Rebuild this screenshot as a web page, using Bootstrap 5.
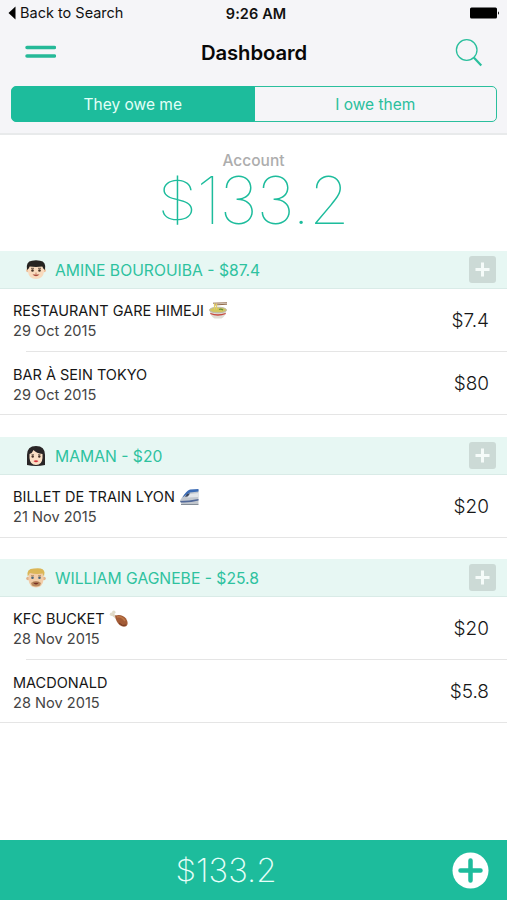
<!DOCTYPE html>
<html lang="en">
<head>
<meta charset="utf-8">
<meta name="viewport" content="width=device-width, initial-scale=1">
<title>Dashboard</title>
<link href="https://cdn.jsdelivr.net/npm/bootstrap@5.3.0/dist/css/bootstrap.min.css" rel="stylesheet">
<style>
:root{--teal:#1dbc9c}
body{font-family:Inter,"Liberation Sans",sans-serif;color:#222;background:#fff;line-height:20px}
svg{display:block;flex:none}
.app{height:900px}
.top-area{background:#f5f5f8;height:135px;border-bottom:2px solid #e8eaeb}
.status-row{height:26px;padding:0 7px 0 8px;font-size:14.5px;color:#111}
.status-row>*{flex:1 1 0}
.clock{font-size:14.5px;font-weight:600;letter-spacing:.1px;padding:1px 0 0 4px}
.title-row{height:60px;padding:0 24px 8px 24px}
.page-title{font-size:20.3px;font-weight:600;color:#080808;letter-spacing:-.1px;padding:1px 3px 0 0}
.segments{margin:0 10px 0 11px;height:36px}
.segments .btn{--bs-btn-color:#2abf9d;--bs-btn-border-color:#2abf9d;--bs-btn-border-radius:5px;--bs-btn-active-bg:var(--teal);--bs-btn-active-border-color:var(--teal);--bs-btn-active-color:#e3fff8;--bs-btn-padding-y:0;font-size:15.5px;letter-spacing:0;flex:1 1 0;line-height:35px}
.account{height:116px;padding-top:16px}
.account-label{font-size:15.5px;font-weight:500;color:#adadad;line-height:20px}
.account-total{font-size:65.5px;font-weight:100;line-height:50px;padding:5px 1px 0 0;color:#1dbc9c;letter-spacing:-1px}
.dollar{display:inline-block;transform:scaleY(.84)}
.group-head{height:38px;background:#e7f7f3;border-bottom:1px solid #d9ebe7;padding:0 11px 0 25px;color:#2ec29f;font-size:15.7px}
.group-name{margin-left:8px;padding-top:2px}
.add-box{width:27px;height:27px;border-radius:3px;background:#ccdad6}
.entry{height:63px;padding:2px 18px 0 13px}
.entry-line{border-bottom:1px solid #e5e5e5}
.entry-first{height:62px}
.entry-sep{height:1px;margin-left:26px;background:#e5e5e5}
.entry-title{font-size:14.5px;color:#171717;line-height:20px}
.entry-date{font-size:14.6px;color:#444;line-height:20px}
.entry-line .entry-text{padding-top:1px}
.price{font-size:19px;font-weight:300;color:#171717}
.owed-group{margin-bottom:22px}
.owed-single{margin-bottom:21px}
.bottom-bar{height:60px;background:var(--teal);color:#e6fff9;padding:0 18px 0 0}
.bottom-total{font-size:33px;font-weight:200;line-height:60px;width:452px}
.bottom-total .dollar{transform:scaleY(.9)}
</style>
</head>
<body>
<svg width="0" height="0" class="position-absolute">
<symbol id="plus-sq" viewBox="0 0 27 27"><path d="M13.5 6.5v14M6.500 13.500h14" stroke="#f5fbf9" stroke-width="3" fill="none"/></symbol>
</svg>
<div class="app d-flex flex-column">
<header class="top-area flex-shrink-0">
  <div class="status-row d-flex align-items-center">
    <div class="d-flex align-items-center"><svg width="8" height="14" viewBox="0 0 8 14"><path d="M7.500.5v13L.5 7z" fill="#000"/></svg><span class="back-text ms-1">Back to Search</span></div>
    <div class="clock text-center">9:26 AM</div>
    <div class="d-flex justify-content-end"><svg width="31" height="14" viewBox="0 0 31 14"><rect x="1" y="1.500" width="27" height="11" rx="1.500"/><path d="M29 5.200q2 1.800 0 3.600z"/></svg></div>
  </div>
  <div class="title-row d-flex align-items-center justify-content-between">
    <svg width="32" height="16" viewBox="0 0 32 16"><path d="M3 3.500h27.500M3 12h27.500" stroke="#25b998" stroke-width="3.500" stroke-linecap="round"/></svg>
    <div class="page-title">Dashboard</div>
    <svg width="28" height="29" viewBox="0 0 28 29" fill="none" stroke="#2abf9d"><circle cx="11.700" cy="12" r="10.300" stroke-width="1.300"/><path d="M18.800 19.500l7.500 8" stroke-width="2.200"/></svg>
  </div>
  <div class="btn-group segments d-flex" role="group">
    <button type="button" class="btn active">They owe me</button>
    <button type="button" class="btn">I owe them</button>
  </div>
</header>
<main class="flex-grow-1">
  <section class="account text-center">
    <div class="account-label">Account</div>
    <div class="account-total"><span class="dollar">$</span>133.2</div>
  </section>
  <section class="owed-group">
    <div class="group-head d-flex align-items-center">
      <svg width="22" height="22" viewBox="0 0 22 22"><circle cx="2.800" cy="11.500" r="1.800" fill="#edc09d"/><circle cx="19.200" cy="11.500" r="1.800" fill="#edc09d"/><path d="M3 7q8-6 16 0v6q-1 7-8 7T3 13z" fill="#f8dabd"/><path d="M2 11Q.5 2.500 7 1.800q4-1.300 8 0Q21.500 2.500 20 11l-1.700-1.500-1-2Q11 8.300 4.700 7.500l-1 2z" fill="#252320"/><circle cx="7.500" cy="11.500" r="1.300" fill="#473325"/><circle cx="14.500" cy="11.500" r="1.300" fill="#473325"/><path d="M6 9.300h3M13 9.300h3" stroke="#44332a" stroke-width=".8"/><path d="M7.500 15.500h7q-3.500 3.500-7 0z" fill="#a8493a"/><path d="M10 14q1 .8 2 0" stroke="#d59e7a" fill="none"/></svg>
      <span class="group-name me-auto">AMINE BOUROUIBA - $87.4</span>
      <span class="add-box"><svg width="27" height="27"><use href="#plus-sq"/></svg></span>
    </div>
    <div class="entry entry-first d-flex align-items-center justify-content-between">
      <div class="entry-text"><div class="entry-title d-flex align-items-center"><span>RESTAURANT GARE HIMEJI</span><svg class="ms-1" width="20" height="18" viewBox="0 0 20 18"><path d="M1.500 8h17q-.5 6-5 8.500h-7Q2 14 1.500 8z" fill="#dfddd5"/><path d="M2.300 11.500q7.500 3 15.400 0" stroke="#c84940" stroke-width="1.300" fill="none"/><ellipse cx="10" cy="8" rx="8.500" ry="2.800" fill="#d2c75f" stroke="#bdb9a8"/><path d="M11 7.500q2-1 4 .5" stroke="#658f3a" stroke-width="1.200" fill="none"/><path d="M5 1.200L19 .8M6 3l13-.8" stroke="#8f6847" stroke-width="1"/><path d="M6.500 1.500v6M8.500 1.500v6" stroke="#e3cf64" stroke-width="1.200"/></svg></div><div class="entry-date">29 Oct 2015</div></div>
      <div class="price">$7.4</div>
    </div>
    <div class="entry-sep"></div>
    <div class="entry entry-line d-flex align-items-center justify-content-between">
      <div class="entry-text"><div class="entry-title">BAR À SEIN TOKYO</div><div class="entry-date">29 Oct 2015</div></div>
      <div class="price">$80</div>
    </div>
  </section>
  <section class="owed-group owed-single">
    <div class="group-head d-flex align-items-center">
      <svg width="22" height="22" viewBox="0 0 22 22"><path d="M2 20V10Q2 1 11 1t9 9v10q-9 2-18 0z" fill="#292526"/><path d="M4.500 9q3-1 4-4 3 3.500 9 4v4q-.5 7-6.500 7t-6.500-7z" fill="#fbe0c5"/><circle cx="7.700" cy="11.500" r="1.200" fill="#493329"/><circle cx="14.300" cy="11.500" r="1.200" fill="#493329"/><path d="M6.500 9.700h2.500M13 9.700h2.500" stroke="#44332a" stroke-width=".7"/><path d="M8.500 16q2.500-1.500 5 0-2.500 2.700-5 0z" fill="#d5333d"/></svg>
      <span class="group-name me-auto">MAMAN - $20</span>
      <span class="add-box"><svg width="27" height="27"><use href="#plus-sq"/></svg></span>
    </div>
    <div class="entry entry-line d-flex align-items-center justify-content-between">
      <div><div class="entry-title d-flex align-items-center"><span>BILLET DE TRAIN LYON</span><svg class="ms-1" width="20" height="18" viewBox="0 0 20 18"><path d="M19.500 2v13.500H4Q.5 15 1 12.500 6 4 12 2z" fill="#c2c7ce"/><path d="M11 1.500l8.500-.5v2.500L11 4.500Q7 7 3.500 9.500 7 3 11 1.500z" fill="#3c6cb5"/><path d="M11 6l8.500-1v4L8 9.500z" fill="#e3e6ea"/><path d="M8 6l3-.7-2 3-3 .7z" fill="#37435a"/><path d="M1 13q9 0 18.500-2v1.500Q11 15 2 14.500z" fill="#51699a"/><path d="M2 16.300h17.500" stroke="#77818c" stroke-width="1.200"/></svg></div><div class="entry-date">21 Nov 2015</div></div>
      <div class="price">$20</div>
    </div>
  </section>
  <section class="owed-group">
    <div class="group-head d-flex align-items-center">
      <svg width="22" height="22" viewBox="0 0 22 22"><circle cx="3" cy="11.500" r="1.800" fill="#e1b28b"/><circle cx="19" cy="11.500" r="1.800" fill="#e1b28b"/><path d="M3.500 7q7.500-6 15 0v6q-1 7.500-7.500 7.500T3.500 13z" fill="#f2cda9"/><path d="M2.700 9.500Q1 1.500 9 1.500q10-1.500 10.500 4l-.5 4-1.500-3Q11 7.500 5 6z" fill="#dbb657"/><circle cx="7.500" cy="10.800" r="1.300" fill="#49667a"/><circle cx="14.500" cy="10.800" r="1.300" fill="#49667a"/><path d="M6 8.800h3M13 8.800h3" stroke="#9f7540" stroke-width=".8"/><path d="M6 16q5-4 10 0l-1 2.500q-4 2-8 0z" fill="#b98a5e"/><path d="M8 15.800h6q-3 3.200-6 0z" fill="#773026"/></svg>
      <span class="group-name me-auto">WILLIAM GAGNEBE - $25.8</span>
      <span class="add-box"><svg width="27" height="27"><use href="#plus-sq"/></svg></span>
    </div>
    <div class="entry entry-first d-flex align-items-center justify-content-between">
      <div class="entry-text"><div class="entry-title d-flex align-items-center"><span>KFC BUCKET</span><svg class="ms-1" width="20" height="18" viewBox="0 0 20 18"><path d="M3 4l6 5" stroke="#ddd4bf" stroke-width="2.500"/><circle cx="2.500" cy="4.300" r="1.700" fill="#e0dbc9"/><circle cx="4.800" cy="2.300" r="1.700" fill="#e0dbc9"/><path d="M6 5.500q7-2 11 3 3 5 .5 7.500-3 2-7-1Q7 12 6 5.500z" fill="#a35b36"/><path d="M8 7q5-1 8 4" stroke="#bd7747" stroke-width="1.500" fill="none"/><path d="M10 13q4 4 7 2" stroke="#743b24" fill="none"/></svg></div><div class="entry-date">28 Nov 2015</div></div>
      <div class="price">$20</div>
    </div>
    <div class="entry-sep"></div>
    <div class="entry entry-line d-flex align-items-center justify-content-between">
      <div class="entry-text"><div class="entry-title">MACDONALD</div><div class="entry-date">28 Nov 2015</div></div>
      <div class="price">$5.8</div>
    </div>
  </section>
</main>
<footer class="bottom-bar flex-shrink-0 d-flex align-items-center justify-content-between">
  <div class="bottom-total text-center"><span class="dollar">$</span>133.2</div>
  <svg width="37" height="37" viewBox="0 0 37 37"><circle cx="18.500" cy="18.500" r="18" fill="#fff"/><path d="M18.500 8.500v20M8.500 18.500h20" stroke="#1dbc9c" stroke-width="4.500" stroke-linecap="round"/></svg>
</footer>
</div>
<script src="https://cdn.jsdelivr.net/npm/bootstrap@5.3.0/dist/js/bootstrap.bundle.min.js"></script>
</body>
</html>
